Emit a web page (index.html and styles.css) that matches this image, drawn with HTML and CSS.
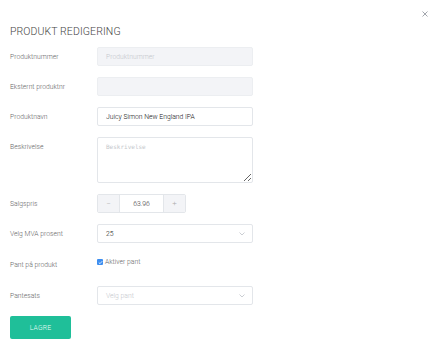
FILE: index.html
```html
<!DOCTYPE html>
<html lang="no">
<head>
  <meta charset="UTF-8" />
  <title>Produkt redigering</title>
  <link rel="stylesheet" href="styles.css">
</head>
<body>

<div class="modal">
  <button class="close" aria-label="Lukk">
    <svg width="6" height="6" viewBox="0 0 6 6"><path d="M0.5 0.5 L5.5 5.5 M5.5 0.5 L0.5 5.5" stroke="#8a8f98" stroke-width="0.8"/></svg>
  </button>

  <h1>PRODUKT REDIGERING</h1>

  <form class="form">
    <div class="row">
      <label>Produktnummer</label>
      <input class="field disabled" placeholder="Produktnummer" disabled>
    </div>
    <div class="row">
      <label>Eksternt produktnr</label>
      <input class="field disabled" disabled>
    </div>
    <div class="row">
      <label>Produktnavn</label>
      <input class="field" value="Juicy Simon New England IPA">
    </div>
    <div class="row row-top">
      <label>Beskrivelse</label>
      <textarea class="field area" placeholder="Beskrivelse"></textarea>
    </div>
    <div class="row">
      <label>Salgspris</label>
      <div class="stepper">
        <span class="step">&minus;</span>
        <span class="num">63.96</span>
        <span class="step">+</span>
      </div>
    </div>
    <div class="row">
      <label>Velg MVA prosent</label>
      <div class="field select">
        <span>25</span>
        <svg class="chev" width="6" height="4" viewBox="0 0 6 4"><path d="M0.5 0.5 L3 3 L5.5 0.5" fill="none" stroke="#b5b9c0" stroke-width="0.7"/></svg>
      </div>
    </div>
    <div class="row row-check">
      <label>Pant på produkt</label>
      <div class="check">
        <span class="box">
          <svg width="5" height="5" viewBox="0 0 5 5"><path d="M0.8 2.6 L2 3.7 L4.2 1.2" fill="none" stroke="#fff" stroke-width="0.8"/></svg>
        </span>
        Aktiver pant
      </div>
    </div>
    <div class="row">
      <label>Pantesats</label>
      <div class="field select">
        <span class="ph">Velg pant</span>
        <svg class="chev" width="6" height="4" viewBox="0 0 6 4"><path d="M0.5 0.5 L3 3 L5.5 0.5" fill="none" stroke="#b5b9c0" stroke-width="0.7"/></svg>
      </div>
    </div>
  </form>

  <button class="save">LAGRE</button>
</div>

</body>
</html>
```

FILE: styles.css
```css
html, body {
  margin: 0;
  padding: 0;
  background: #fff;
  font-family: Roboto, "Liberation Sans", sans-serif;
  font-weight: 300;
  color: #666;
}
.modal {
  position: relative;
  width: 439px;
  height: 353px;
  box-sizing: border-box;
  padding: 25px 10px 0 10px;
}
.close {
  position: absolute;
  top: 11px;
  right: 11px;
  border: 0;
  background: none;
  padding: 0;
  width: 6px;
  height: 6px;
  line-height: 0;
}
h1 {
  margin: 0 0 9px;
  font-size: 10.5px;
  font-weight: 300;
  color: #444;
  letter-spacing: 0.1px;
}
.form {
  display: flex;
  flex-direction: column;
  gap: 11px;
}
.row {
  display: grid;
  grid-template-columns: 87px 156px;
  align-items: center;
}
.row label {
  font-size: 6.8px;
  color: #666;
}
.row-top {
  align-items: start;
}
.row-top label {
  padding-top: 6px;
}
.field {
  box-sizing: border-box;
  height: 19px;
  width: 156px;
  border: 1px solid #e3e6ea;
  border-radius: 2px;
  background: #fff;
  padding: 0 8px;
  font-family: inherit;
  font-size: 6.8px;
  font-weight: 300;
  color: #111;
  outline: none;
}
.field::placeholder {
  color: #c4c7cc;
}
.disabled {
  background: #f3f4f7;
  border-color: #eceef1;
}
.area {
  height: 46px;
  padding: 5px 8px;
  font-family: "DejaVu Sans Mono", monospace;
  font-size: 6px;
  resize: both;
}
.stepper {
  display: flex;
  height: 19px;
  width: 89px;
  box-sizing: border-box;
  border: 1px solid #e3e6ea;
  border-radius: 2px;
  overflow: hidden;
}
.step {
  width: 21px;
  background: #f3f4f7;
  color: #aaa;
  font-size: 8px;
  display: flex;
  align-items: center;
  justify-content: center;
}
.num {
  flex: 1;
  border-left: 1px solid #e3e6ea;
  border-right: 1px solid #e3e6ea;
  display: flex;
  align-items: center;
  justify-content: center;
  font-size: 6.8px;
  color: #333;
}
.select {
  display: flex;
  align-items: center;
  justify-content: space-between;
}
.select .ph {
  color: #c4c7cc;
}
.chev {
  margin-right: -1px;
}
.row-check {
  margin-bottom: 6px;
  align-items: start;
}
.row-check label {
  padding-top: 7px;
}
.check {
  display: flex;
  align-items: center;
  gap: 2px;
  padding-top: 4px;
  font-size: 6.8px;
  color: #666;
}
.box {
  width: 6px;
  height: 6px;
  background: #3d8ef0;
  border-radius: 1px;
  display: flex;
  align-items: center;
  justify-content: center;
}
.save {
  margin-top: 11px;
  width: 61px;
  height: 23px;
  border: 0;
  border-radius: 2px;
  background: #1fbf99;
  color: #eafbf6;
  font-family: inherit;
  font-size: 6.8px;
  font-weight: 300;
  letter-spacing: 0.2px;
}
```
